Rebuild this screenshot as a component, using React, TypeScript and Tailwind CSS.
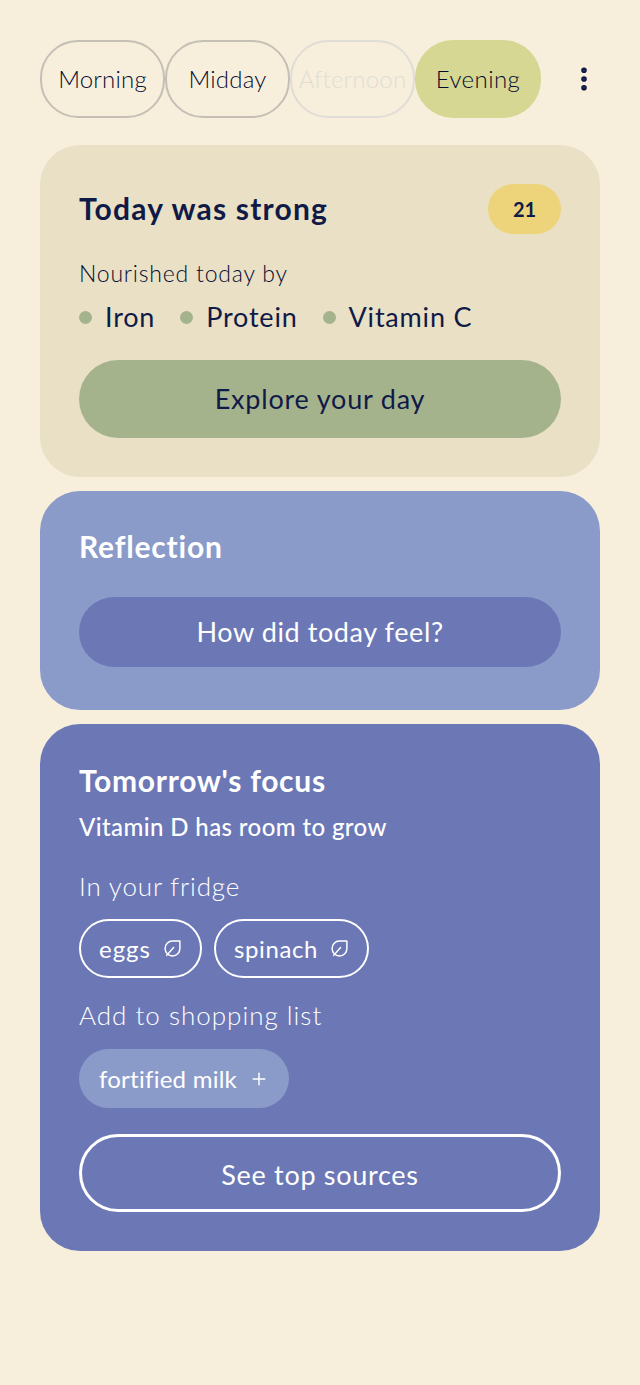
import React from 'react';
import { MoreVertical, Plus } from 'lucide-react';

const font = "font-['Lato',sans-serif]";

const Leaf = () => (
  <svg width="19" height="19" viewBox="0 0 18 18" fill="none" stroke="currentColor" strokeWidth="1.4" strokeLinecap="round" strokeLinejoin="round">
    <path d="M16 2H9C5 2 2 5 2 9c0 4 3 7 7 7 4 0 7-3 7-7V2Z" />
    <path d="M3.5 15.5 10 8" />
  </svg>
);

const Tab = ({ label, kind }: { label: string; kind: 'normal' | 'faded' | 'active' }) => {
  if (kind === 'active') {
    return (
      <div className="flex h-[78px] w-[126px] shrink-0 items-center justify-center rounded-[38px] bg-[#d5d792] text-[24px] tracking-[0.4px] font-light text-[#050b30]">
        {label}
      </div>
    );
  }
  if (kind === 'faded') {
    return (
      <div className="flex h-[78px] w-[125px] shrink-0 items-center justify-center rounded-[38px] border-2 border-[#e0ddd6] text-[24px] tracking-[0.2px] font-light text-[#e0ddd6]">
        {label}
      </div>
    );
  }
  return (
    <div className="flex h-[78px] w-[125px] shrink-0 items-center justify-center rounded-[38px] border-2 border-[#c5bfb5] text-[24px] tracking-[0.2px] font-light text-[#050b30]">
      {label}
    </div>
  );
};

const Nutrient = ({ label }: { label: string }) => (
  <div className="flex items-center gap-[13px]">
    <span className="h-[13px] w-[13px] rounded-full bg-[#a5b38d]" />
    <span>{label}</span>
  </div>
);

const App = () => {
  return (
    <div className={`${font} min-h-[1385px] bg-[#f7efdc] px-10 pt-10`}>
      <div className="flex items-center">
        <Tab label="Morning" kind="normal" />
        <Tab label="Midday" kind="normal" />
        <Tab label="Afternoon" kind="faded" />
        <Tab label="Evening" kind="active" />
        <div className="ml-[28px] flex w-[30px] justify-center text-[#101a47]">
          <MoreVertical size={30} strokeWidth={2.5} />
        </div>
      </div>

      <section className="mt-[27px] flex h-[332px] flex-col rounded-[40px] bg-[#e9e0c5] px-[39px] pt-[39px] text-[#101a47]">
        <div className="flex h-[50px] items-center justify-between">
          <h2 className="-mt-[2px] text-[30px] font-bold tracking-[1.2px]">Today was strong</h2>
          <span className="flex h-[50px] w-[73px] items-center justify-center rounded-[25px] bg-[#edd47b] text-[20px] font-bold">21</span>
        </div>
        <p className="mt-[24px] text-[23px] leading-[30px] font-light tracking-[0.8px] text-[#050b30]">Nourished today by</p>
        <div className="mt-[11px] flex gap-[25px] text-[27px] leading-[36px] tracking-[0.8px]">
          <Nutrient label="Iron" />
          <Nutrient label="Protein" />
          <Nutrient label="Vitamin C" />
        </div>
        <button className="mt-[25px] h-[78px] rounded-[39px] bg-[#a5b38d] text-[27px] tracking-[0.8px]">Explore your day</button>
      </section>

      <section className="mt-[14px] h-[219px] rounded-[40px] bg-[#8b9bc9] px-[39px] pt-[35px] text-white">
        <h2 className="text-[30px] leading-[40px] font-bold tracking-[0.8px]">Reflection</h2>
        <button className="mt-[31px] h-[70px] w-full rounded-[35px] bg-[#6c78b6] text-[27px] tracking-[0.6px]">How did today feel?</button>
      </section>

      <section className="mt-[14px] h-[527px] rounded-[40px] bg-[#6c78b6] px-[39px] pt-[36px] text-white">
        <h2 className="text-[30px] leading-[40px] font-bold tracking-[0.7px]">Tomorrow's focus</h2>
        <p className="mt-[11px] text-[24px] leading-[32px] font-medium tracking-[0.4px]">Vitamin D has room to grow</p>
        <p className="mt-[27px] text-[26px] leading-[32px] font-light tracking-[0.85px]">In your fridge</p>
        <div className="mt-[17px] flex gap-[12px]">
          <div className="flex h-[59px] items-center gap-[12px] rounded-[30px] border-2 border-white px-[18px] text-[24px] tracking-[1px]">
            eggs <Leaf />
          </div>
          <div className="flex h-[59px] items-center gap-[12px] rounded-[30px] border-2 border-white px-[18px] text-[24px] tracking-[0.6px]">
            spinach <Leaf />
          </div>
        </div>
        <p className="mt-[21px] text-[26px] leading-[32px] font-light tracking-[1px]">Add to shopping list</p>
        <div className="mt-[18px] flex">
          <div className="flex h-[59px] items-center gap-[12px] rounded-[30px] bg-[#8b9bc9] px-5 text-[24px] tracking-[0.25px]">
            fortified milk <Plus size={20} strokeWidth={1.75} />
          </div>
        </div>
        <button className="mt-[26px] h-[78px] w-full rounded-[39px] border-[3px] border-white pt-[4px] text-[27px] tracking-[0.7px]">See top sources</button>
      </section>
    </div>
  );
};

export default App;
